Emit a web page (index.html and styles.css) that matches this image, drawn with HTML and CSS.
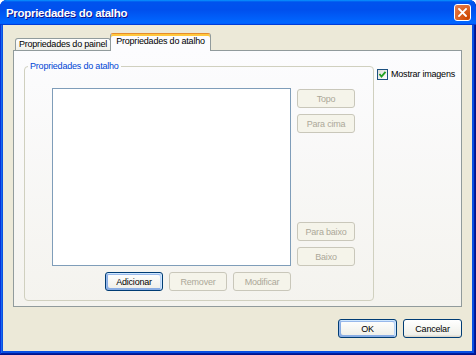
FILE: index.html
```html
<!DOCTYPE html>
<html lang="pt">

<head>
    <meta charset="UTF-8">
    <meta name="viewport" content="width=device-width, initial-scale=1.0">
    <title>Propriedades do atalho</title>
    <link rel="stylesheet" href="styles.css">
</head>

<body>
    <div class="window">
        <div class="titlebar">
            <span class="title">Propriedades do atalho</span>
            <span class="close">
                <svg width="9" height="9" viewBox="0 0 9 9">
                    <path d="M1 1 L8 8 M8 1 L1 8" stroke="#fff" stroke-width="1.8" stroke-linecap="square" />
                </svg>
            </span>
        </div>
        <div class="client">
            <div class="tabs">
                <div class="tab">Propriedades do painel</div>
                <div class="tab active">Propriedades do atalho</div>
            </div>
            <div class="panel">
                <fieldset class="group">
                    <legend>Propriedades do atalho</legend>
                    <div class="group-body">
                        <div class="listbox"></div>
                        <div class="side-buttons">
                            <div class="btn-stack">
                                <button class="btn" disabled>Topo</button>
                                <button class="btn" disabled>Para cima</button>
                            </div>
                            <div class="btn-stack">
                                <button class="btn" disabled>Para baixo</button>
                                <button class="btn" disabled>Baixo</button>
                            </div>
                        </div>
                        <div class="bottom-buttons">
                            <button class="btn focus">Adicionar</button>
                            <button class="btn" disabled>Remover</button>
                            <button class="btn" disabled>Modificar</button>
                        </div>
                    </div>
                </fieldset>
                <label class="check">
                    <span class="box">
                        <svg width="9" height="9" viewBox="0 0 9 9">
                            <path d="M1.5 4 L3.5 6.5 L7.5 1.8" fill="none" stroke="#21a121" stroke-width="1.8" />
                        </svg>
                    </span>
                    Mostrar imagens
                </label>
            </div>
            <div class="dialog-buttons">
                <button class="btn default">OK</button>
                <button class="btn">Cancelar</button>
            </div>
        </div>
    </div>
</body>

</html>
```

FILE: styles.css
```css
* {
    padding: 0;
    margin: 0;
    box-sizing: border-box;
}

html,
body {
    width: 476px;
    height: 355px;
    background: #fff;
    overflow: hidden;
}

body {
    font-family: "Liberation Sans", Arial, sans-serif;
    font-size: 9px;
    letter-spacing: -0.2px;
    color: #000;
}

.window {
    width: 476px;
    height: 355px;
    display: flex;
    flex-direction: column;
    background: #0a4fe2;
    border-radius: 7px 7px 0 0;
    box-shadow: inset -1px -1px #00138c, inset 1px 1px #0831d9, inset -2px -2px #001ea0, inset 2px 2px #166aee;
}

.titlebar {
    height: 25px;
    display: flex;
    align-items: center;
    justify-content: space-between;
    padding: 0 5px 0 6px;
    border-radius: 7px 7px 0 0;
    background: linear-gradient(180deg, #0997ff, #0053ee 8%, #0050ee 40%, #0066ff 88%, #0066ff 93%, #005bff 95%, #003dd7 96%, #003dd7);
}

.title {
    color: #fff;
    font-weight: bold;
    font-size: 11.5px;
    letter-spacing: -0.3px;
    text-shadow: 1px 1px #0f1089;
}

.close {
    width: 17px;
    height: 17px;
    display: flex;
    align-items: center;
    justify-content: center;
    border: 1px solid #fff;
    border-radius: 3px;
    background: radial-gradient(circle at 85% 85%, #cc4600, #dc6527 55%, #e5805a);
}

.client {
    flex: 1;
    margin: 0 4px 4px 3px;
    background: #ece9d8;
    padding: 8px 10px 0 10px;
    display: flex;
    flex-direction: column;
}

.tabs {
    height: 17px;
    display: flex;
    align-items: flex-end;
    padding-left: 2px;
}

.tab {
    height: 12px;
    width: 96px;
    line-height: 11px;
    text-align: center;
    border: 1px solid #919b9c;
    border-bottom: none;
    border-radius: 3px 3px 0 0;
    background: linear-gradient(#fff, #fafaf9 26%, #f0f0ea 95%, #ecebe6);
}

.tab.active {
    position: relative;
    z-index: 1;
    height: 18px;
    width: 101px;
    line-height: 15px;
    margin-bottom: -1px;
    margin-left: -1px;
    background: #fcfcfe;
    border-top: 1px solid #e68b2c;
    box-shadow: inset 0 2px #ffc83c;
}

.panel {
    height: 257px;
    border: 1px solid #919b9c;
    background: linear-gradient(#fcfcfe, #f4f3ee);
    display: flex;
    align-items: flex-start;
    padding: 9px 0 0 10px;
}

.group {
    width: 350px;
    border: 1px solid #d0d0bf;
    border-radius: 4px;
    padding: 16px 18px 9px 27px;
}

.group legend {
    color: #0046d5;
    line-height: 12px;
    padding: 0 2px;
    margin-left: -24px;
}

.group-body {
    display: grid;
    grid-template-columns: 239px 58px;
    grid-template-rows: 178px 19px;
    column-gap: 6px;
    row-gap: 6px;
}

.listbox {
    background: #fff;
    border: 1px solid #7f9db9;
}

.side-buttons {
    display: flex;
    flex-direction: column;
    justify-content: space-between;
    padding-top: 1px;
}

.btn-stack {
    display: flex;
    flex-direction: column;
    gap: 6px;
}

.bottom-buttons {
    display: flex;
    justify-content: flex-end;
    gap: 6px;
}

.btn {
    width: 58px;
    height: 19px;
    font-family: inherit;
    font-size: 9px;
    letter-spacing: -0.2px;
    color: #000;
    border: 1px solid #003c74;
    border-radius: 3px;
    background: linear-gradient(#fff, #f0f0ea 86%, #d6d0c5);
}

.btn:disabled {
    color: #aca899;
    border-color: #c9c7ba;
    background: #f5f4ea;
}

.btn.focus,
.btn.default {
    box-shadow: inset -1px 1px #cee7ff, inset 1px 2px #98b8ea, inset -2px 2px #bcd4f6, inset 1px -1px #89ade4, inset 2px -2px #89ade4;
}

.check {
    display: flex;
    align-items: center;
    gap: 3px;
    margin: 8px 0 0 3px;
    line-height: 13px;
}

.box {
    width: 11px;
    height: 11px;
    border: 1px solid #1c5180;
    background: linear-gradient(135deg, #dcdcd7, #fff);
    display: flex;
    align-items: center;
    justify-content: center;
}

.dialog-buttons {
    display: flex;
    justify-content: flex-end;
    gap: 6px;
    margin-top: 12px;
}

.dialog-buttons .btn {
    width: 59px;
}
```
